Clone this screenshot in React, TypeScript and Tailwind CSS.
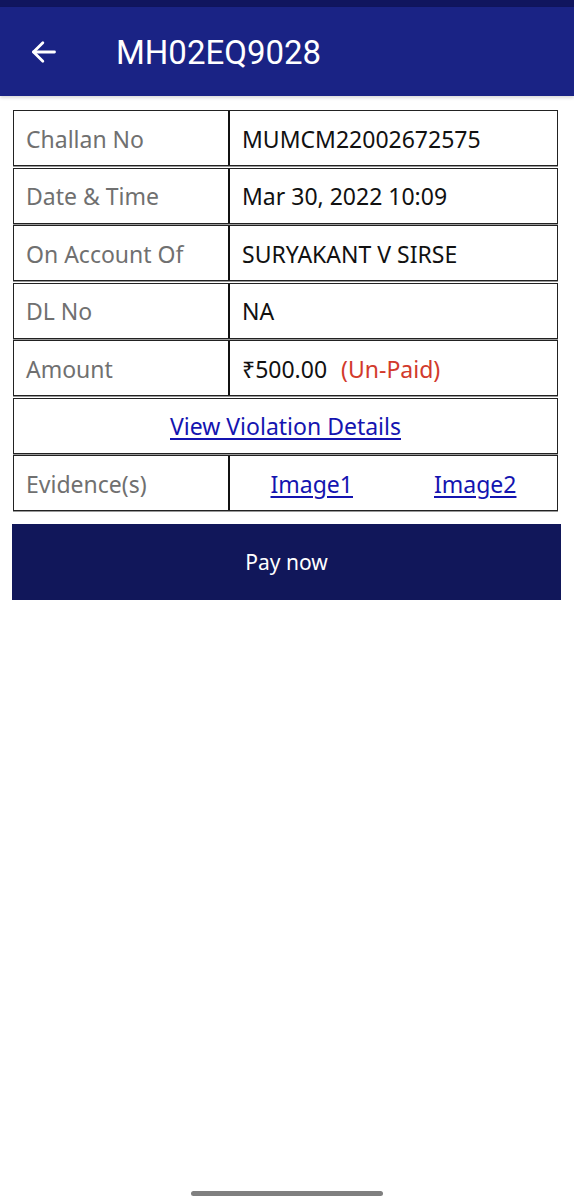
import React from "react";

const rows: { label: string; value: React.ReactNode }[] = [
  { label: "Challan No", value: "MUMCM22002672575" },
  { label: "Date & Time", value: "Mar 30, 2022 10:09" },
  { label: "On Account Of", value: "SURYAKANT V SIRSE" },
  { label: "DL No", value: "NA" },
  {
    label: "Amount",
    value: (
      <span>
        ₹500.00<span className="ml-[14px] text-[#d23a2c]">(Un-Paid)</span>
      </span>
    ),
  },
];

export default function App() {
  return (
    <div
      className="relative w-[574px] h-[1200px] bg-white overflow-hidden"
      style={{ fontFamily: '"Noto Sans", "Open Sans", sans-serif' }}
    >
      <div className="h-[7px] bg-[#10155e]" />
      <div
        className="h-[89px] bg-[#1a2385] flex items-center shadow-[0_2px_3px_rgba(0,0,0,0.15)]"
        style={{ fontFamily: "Roboto, sans-serif" }}
      >
        <svg
          className="ml-[30px]"
          width="28"
          height="28"
          viewBox="0 0 24 24"
          fill="none"
          stroke="white"
          strokeWidth="2.4"
          strokeLinecap="round"
          strokeLinejoin="round"
        >
          <path d="M21 12H3" />
          <path d="M11 4l-8 8 8 8" />
        </svg>
        <div className="ml-[58px] mt-[2px] text-white text-[33px] leading-none">MH02EQ9028</div>
      </div>

      <div className="mt-[14px] mx-[13px] w-[545px] flex flex-col gap-[1.5px] bg-white">
        {rows.map((r) => (
          <div key={r.label} className="h-[56px] flex border border-[#222] shadow-[0_1px_0_#999]">
            <div className="w-[216px] border-r-2 border-[#111] flex items-center pl-[12px] pt-[2px] text-[23px] text-[#707070]">
              {r.label}
            </div>
            <div className="flex-1 flex items-center pl-[12px] pt-[2px] text-[23px] text-[#111]">{r.value}</div>
          </div>
        ))}
        <div className="h-[56px] flex items-center justify-center pt-[2px] border border-[#222] shadow-[0_1px_0_#999]">
          <span className="text-[23px] text-[#1414b0] underline underline-offset-[3px]">View Violation Details</span>
        </div>
        <div className="h-[56px] flex border border-[#222] shadow-[0_1px_0_#999]">
          <div className="w-[216px] border-r-2 border-[#111] flex items-center pl-[12px] pt-[2px] text-[23px] text-[#707070]">
            Evidence(s)
          </div>
          <div className="flex-1 grid grid-cols-2 items-center pt-[2px] text-[23px] text-[#1414b0]">
            <span className="text-center underline underline-offset-[3px]">Image1</span>
            <span className="text-center underline underline-offset-[3px]">Image2</span>
          </div>
        </div>
      </div>

      <div className="mt-[13px] mx-[12px] w-[549px] h-[76px] bg-[#11175a] flex items-center justify-center pt-[2px] text-white text-[21px]">
        Pay now
      </div>

      <div className="absolute left-[191px] top-[1191px] w-[192px] h-[5px] rounded-full bg-[#808080]" />
    </div>
  );
}
